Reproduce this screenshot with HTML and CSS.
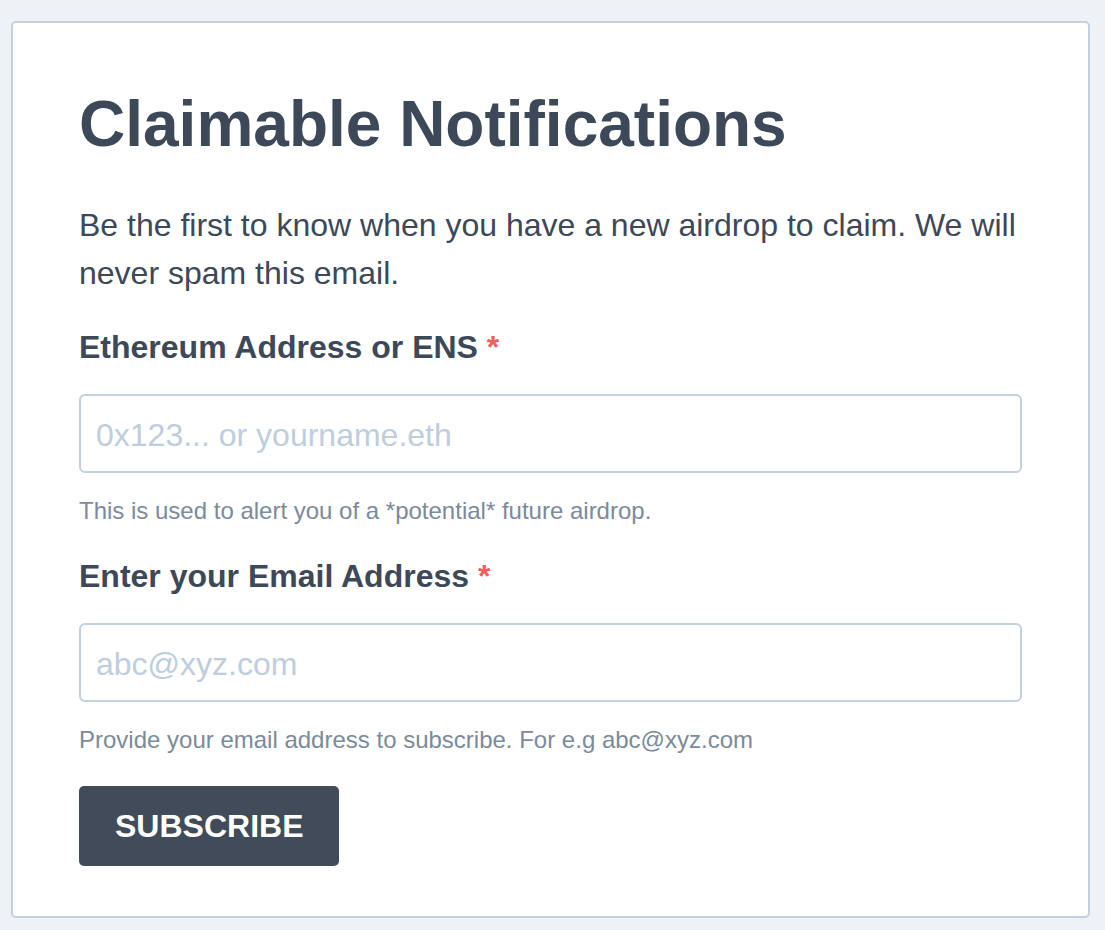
FILE: index.html
```html
<!DOCTYPE html>
<html lang="en">
<head>
    <meta charset="UTF-8">
    <meta name="viewport" content="width=device-width, initial-scale=1.0">
    <title>Claimable Notifications</title>
    <link rel="stylesheet" href="styles.css">
</head>
<body>
    <div class="card">
        <h1 class="title">Claimable Notifications</h1>
        <p class="intro">Be the first to know when you have a new airdrop to claim. We will never spam this email.</p>

        <form class="subscribe-form" onsubmit="return false">
            <div class="field">
                <label class="field-label" for="address">Ethereum Address or ENS <span class="required">*</span></label>
                <input class="field-input" id="address" type="text" placeholder="0x123... or yourname.eth">
                <div class="field-help">This is used to alert you of a *potential* future airdrop.</div>
            </div>

            <div class="field">
                <label class="field-label" for="email">Enter your Email Address <span class="required">*</span></label>
                <input class="field-input" id="email" type="email" placeholder="abc@xyz.com">
                <div class="field-help">Provide your email address to subscribe. For e.g abc@xyz.com</div>
            </div>

            <button class="subscribe-btn" type="submit">SUBSCRIBE</button>
        </form>
    </div>
</body>
</html>
```

FILE: styles.css
```css
body {
    margin: 0;
    padding: 21px 15px 13px 11px;
    font-family: 'Liberation Sans', Arial, sans-serif;
    background: #eef2f7;
    color: #3d4858;
}
.card {
    background: white;
    border: 2px solid #c4d0dd;
    border-radius: 5px;
    padding: 65px 66px 50px 66px;
}
.title {
    margin: 0;
    font-size: 64px;
    line-height: 72px;
    font-weight: bold;
}
.intro {
    margin: 41px 0 0;
    font-size: 32px;
    line-height: 48px;
}
.subscribe-form {
    margin-top: 30px;
}
.field {
    display: flex;
    flex-direction: column;
    margin-bottom: 29px;
}
.field-label {
    font-size: 32px;
    line-height: 40px;
    font-weight: bold;
    margin-bottom: 27px;
}
.required {
    color: #f25d5d;
}
.field-input {
    box-sizing: border-box;
    height: 79px;
    padding: 19px 15px 16px;
    border: 2px solid #c4d0dd;
    border-radius: 6px;
    font-family: inherit;
    font-size: 32px;
    line-height: 40px;
    color: #3d4858;
    background: white;
    outline: none;
}
.field-input::placeholder {
    color: #c0cddd;
}
.field-help {
    margin-top: 22px;
    font-size: 24px;
    line-height: 32px;
    color: #7d8a9b;
}
.field:last-of-type {
    margin-bottom: 30px;
}
.subscribe-btn {
    height: 80px;
    padding: 0 36px;
    border: none;
    border-radius: 5px;
    background: #414b5a;
    color: white;
    font-family: inherit;
    font-size: 32px;
    font-weight: bold;
    cursor: pointer;
}
```
